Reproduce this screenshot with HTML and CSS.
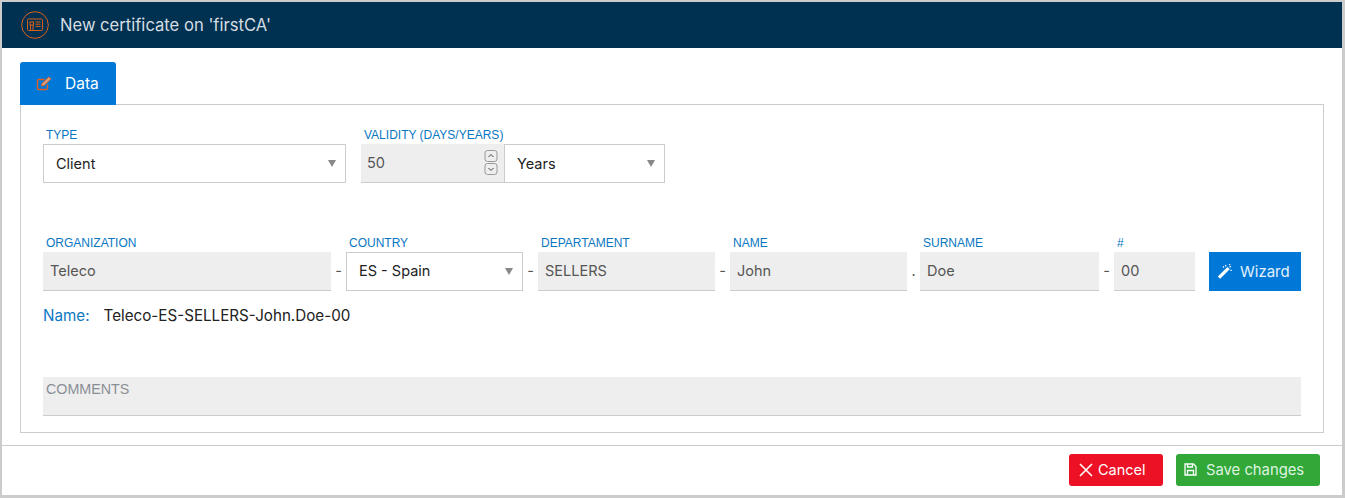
FILE: index.html
```html
<!DOCTYPE html>
<html lang="en">
<head>
    <meta charset="UTF-8">
    <title>New certificate</title>
    <link rel="stylesheet" href="styles.css">
</head>
<body>

<div class="dialog">
    <header class="dialog-header">
        <svg class="header-icon" width="28" height="28" viewBox="0 0 28 28" fill="none" stroke="#d9601c">
            <circle cx="14" cy="14" r="13.300"/>
            <rect x="6.500" y="8" width="15" height="11.500" rx="1.200"/>
            <rect x="9" y="11" width="3.500" height="3"/>
            <path d="M9.500 14v5.500M12 14v5.500M14.500 11h5M14.500 13.200h5M14.500 15.400h5"/>
        </svg>
        <h1>New certificate on 'firstCA'</h1>
    </header>

    <div class="dialog-body">
        <div class="tabs">
            <div class="tab">
                <svg width="16" height="15" viewBox="0 0 16 15" fill="none" stroke="#e2601f" stroke-width="1.300">
                    <path d="M11.500 8.500v3.700a1.300 1.300 0 0 1-1.300 1.300H2.800a1.300 1.300 0 0 1-1.300-1.300V4.800a1.300 1.300 0 0 1 1.300-1.300h5.700"/>
                    <path d="M5.500 10l.6-2.600L12.800 1l2 2-6.700 6.400z" fill="#d9a27e" stroke-width="1"/>
                </svg>
                Data
            </div>
        </div>

        <div class="panel">
            <div class="row-top">
                <div class="field w-type">
                    <label>TYPE</label>
                    <div class="select">Client</div>
                </div>
                <div class="field w-validity">
                    <label>VALIDITY (DAYS/YEARS)</label>
                    <div class="validity">
                        <div class="number">
                            50
                            <span class="spin">
                                <svg width="14" height="12" viewBox="0 0 14 12" fill="none" stroke="#999"><rect x="1" y=".5" width="12" height="11" rx="2.500"/><path d="M4.500 7L7 4.500 9.500 7" stroke="#444"/></svg>
                                <svg width="14" height="12" viewBox="0 0 14 12" fill="none" stroke="#999"><rect x="1" y=".5" width="12" height="11" rx="2.500"/><path d="M4.500 5L7 7.500 9.500 5" stroke="#444"/></svg>
                            </span>
                        </div>
                        <div class="select select-years">Years</div>
                    </div>
                </div>
            </div>

            <div class="row-name">
                <div class="field w-org">
                    <label>ORGANIZATION</label>
                    <div class="input">Teleco</div>
                </div>
                <span class="sep">-</span>
                <div class="field w-country">
                    <label>COUNTRY</label>
                    <div class="select select-country">ES - Spain</div>
                </div>
                <span class="sep">-</span>
                <div class="field w-mid">
                    <label>DEPARTAMENT</label>
                    <div class="input">SELLERS</div>
                </div>
                <span class="sep">-</span>
                <div class="field w-mid">
                    <label>NAME</label>
                    <div class="input">John</div>
                </div>
                <span class="sep sep-dot">.</span>
                <div class="field w-surname">
                    <label>SURNAME</label>
                    <div class="input">Doe</div>
                </div>
                <span class="sep">-</span>
                <div class="field w-num">
                    <label>#</label>
                    <div class="input">00</div>
                </div>
                <button class="btn btn-wizard">
                    <svg width="15" height="15" viewBox="0 0 15 15" fill="#fff">
                        <path d="M10.500 3l2.200 2.200L3.200 14.800.8 12.400z"/>
                        <path d="M8.500 1l.5 1.500M13.800 2.200l-1.300 1.100M14.800 6.500l-1.500-.5M6 2.500l1 1M12.500 0l.3 1.200" stroke="#fff" stroke-width="1.200"/>
                    </svg>
                    Wizard
                </button>
            </div>

            <div class="name-preview">
                <span class="name-label">Name:</span>
                <span>Teleco-ES-SELLERS-John.Doe-00</span>
            </div>

            <div class="comments">COMMENTS</div>
        </div>
    </div>

    <footer class="dialog-footer">
        <button class="btn btn-cancel">
            <svg width="14" height="14" viewBox="0 0 14 14" stroke="#fff" stroke-width="1.600"><path d="M1 1l12 12M13 1L1 13"/></svg>
            Cancel
        </button>
        <button class="btn btn-save">
            <svg width="13" height="13" viewBox="0 0 13 13" fill="none" stroke="#fff" stroke-width="1.300"><path d="M1 1h8.500L12 3.500V12H1z"/><path d="M3.500 1v3h5V1M3.500 12V7.500h6V12"/></svg>
            Save changes
        </button>
    </footer>
</div>

</body>
</html>
```

FILE: styles.css
```css
* {
    box-sizing: border-box;
}

body {
    margin: 0;
    height: 498px;
    overflow: hidden;
    background-color: #ccc;
    font-family: 'Inter', 'Liberation Sans', sans-serif;
    font-size: 14.500px;
    color: #333;
    padding: 2px 3px 3px 2px;
}

.dialog {
    background-color: white;
    height: 493px;
    display: flex;
    flex-direction: column;
}

.dialog-header {
    background-color: #003150;
    height: 46px;
    display: flex;
    align-items: center;
    padding-left: 19px;
    flex: none;
}

.header-icon {
    margin-right: 11px;
}

.dialog-header h1 {
    margin: 0;
    font-size: 16.600px;
    font-weight: 400;
    color: #d5dde3;
}

.dialog-body {
    flex: 1;
    padding: 14px 18px 12px 18px;
}

.tabs {
    display: flex;
}

.tab {
    width: 96px;
    height: 43px;
    background-color: #0078d7;
    color: white;
    border-radius: 3px 3px 0 0;
    display: flex;
    align-items: center;
    gap: 13px;
    padding-left: 16px;
    font-size: 15.500px;
}

.panel {
    border: 1px solid #ccc;
    height: 329px;
    margin-top: -1px;
    padding: 22px 22px 0 22px;
}

.row-top {
    display: flex;
    gap: 15px;
}

.row-name {
    display: flex;
    align-items: flex-end;
    margin-top: 52px;
}

.field label {
    display: block;
    font-family: 'Liberation Sans', sans-serif;
    font-size: 12px;
    line-height: 17px;
    height: 17px;
    color: #0a77c2;
    padding-left: 3px;
}

.w-type { width: 303px; }
.w-validity { width: 304px; }
.w-org { width: 288px; }
.w-country { width: 177px; }
.w-mid { width: 177px; }
.w-surname { width: 179px; }
.w-num { width: 81px; }

.select,
.input,
.number {
    height: 39px;
    display: flex;
    align-items: center;
    font-size: 14.500px;
}

.select {
    position: relative;
    border: 1px solid #ccc;
    padding-left: 12px;
    background-color: white;
    color: #222;
}

.select-country {
    padding-bottom: 2px;
}

.select::after {
    content: '';
    position: absolute;
    right: 9px;
    top: 15px;
    border-left: 4.500px solid transparent;
    border-right: 4.500px solid transparent;
    border-top: 7px solid #888;
}

.validity {
    display: flex;
}

.number {
    width: 143px;
    flex: none;
    background-color: #eee;
    border-bottom: 1px solid #ccc;
    padding-left: 6px;
    padding-bottom: 2px;
    position: relative;
    color: #555;
}

.spin {
    position: absolute;
    right: 6px;
    top: 6px;
    display: flex;
    flex-direction: column;
    gap: 1px;
}

.spin svg {
    display: block;
}

.select-years {
    flex: 1;
}

.input {
    background-color: #eee;
    border-bottom: 1px solid #ccc;
    padding-left: 7px;
    padding-bottom: 2px;
    color: #555;
}

.sep {
    width: 15px;
    height: 39px;
    padding-bottom: 2px;
    display: flex;
    align-items: center;
    justify-content: center;
    color: #555;
    flex: none;
}

.sep-dot {
    width: 13px;
}

.btn {
    border: none;
    color: white;
    font-family: inherit;
    font-size: 14.500px;
    display: flex;
    align-items: center;
    cursor: pointer;
}

.btn-wizard {
    width: 92px;
    height: 39px;
    margin-left: 14px;
    background-color: #0078d7;
    color: #e3f1fb;
    font-size: 15px;
    padding-left: 8px;
    padding-bottom: 2px;
    gap: 8px;
}

.name-preview {
    margin-top: 14px;
    height: 20px;
    display: flex;
    align-items: center;
    gap: 14px;
    font-size: 15.200px;
    color: #222;
}

.name-label {
    color: #0a77c2;
}

.comments {
    margin-top: 52px;
    height: 39px;
    background-color: #eee;
    border-bottom: 1px solid #ccc;
    font-family: 'Liberation Sans', sans-serif;
    font-size: 14.300px;
    color: #8a8f96;
    padding: 4px 3px;
}

.dialog-footer {
    border-top: 1px solid #ccc;
    height: 50px;
    flex: none;
    display: flex;
    justify-content: flex-end;
    gap: 13px;
    padding: 8px 22px 0 0;
}

.btn-cancel,
.btn-save {
    height: 32px;
    padding-bottom: 2px;
    border-radius: 3px;
}

.btn-cancel {
    width: 94px;
    background-color: #ed1125;
    padding-left: 10px;
    gap: 5px;
}

.btn-save {
    width: 144px;
    background-color: #31a838;
    color: #dff3e0;
    font-size: 14.800px;
    padding-left: 8px;
    gap: 9px;
}
```
